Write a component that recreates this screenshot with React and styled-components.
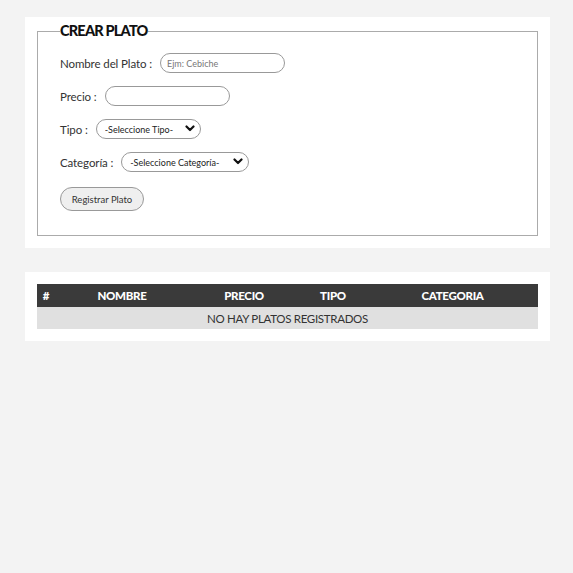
import React from "react";
import styled, { createGlobalStyle } from "styled-components";

const GlobalStyle = createGlobalStyle`
  * { box-sizing: border-box; }
  html, body {
    margin: 0;
    padding: 0;
    background-color: #f3f3f3;
    font-family: Lato, "Open Sans", sans-serif;
    color: #333;
  }
`;

const Page = styled.div`
  padding: 17px 23px 0 25px;
  display: flex;
  flex-direction: column;
  gap: 24px;
`;

const Panel = styled.section`
  width: 525px;
  background-color: #fff;
  padding: ${props => props.$pad};
`;

const Fieldset = styled.fieldset`
  margin: 0;
  border: 1px solid #ababab;
  padding: 0 22px 24px;
  display: flex;
  flex-direction: column;
`;

const Legend = styled.legend`
  padding: 0;
  font-size: 14.5px;
  line-height: 18px;
  font-weight: 900;
  letter-spacing: -0.8px;
  color: #111;
`;

const Row = styled.div`
  display: flex;
  align-items: center;
  gap: 8px;
  height: 20px;
  margin-top: ${props => props.$top || 13}px;
`;

const Label = styled.label`
  font-size: 11.5px;
  letter-spacing: -0.1px;
  color: #333;
`;

const TextInput = styled.input`
  width: 125px;
  height: 20px;
  border: 1px solid #999;
  border-radius: 10px;
  padding: 0 6px;
  font-family: inherit;
  font-size: 9px;
  color: #333;
  outline: none;

  &::placeholder {
    color: #777;
  }
`;

const SelectWrap = styled.div`
  position: relative;
  width: ${props => props.$w}px;
  height: 20px;
`;

const Select = styled.select`
  appearance: none;
  display: block;
  width: 100%;
  height: 20px;
  border: 1px solid #999;
  border-radius: 10px;
  background: #fff;
  padding: 0 0 0 8px;
  font-family: inherit;
  font-size: 9px;
  color: #222;
  outline: none;
`;

const Chevron = styled.svg`
  position: absolute;
  right: 6px;
  top: 6px;
  width: 10px;
  height: 8px;
  pointer-events: none;
`;

const Button = styled.button`
  width: 84px;
  height: 24px;
  margin-top: 15px;
  border: 1px solid #999;
  border-radius: 12px;
  background-color: #efefef;
  font-family: inherit;
  font-size: 9.5px;
  color: #333;
  padding: 0;
`;

const Table = styled.table`
  width: 501px;
  border-collapse: collapse;
  table-layout: fixed;
`;

const Th = styled.th`
  background-color: #3a3a3a;
  color: #fff;
  height: 23px;
  padding: 0;
  font-size: 11.5px;
  font-weight: 900;
  letter-spacing: -0.3px;
  text-align: center;
`;

const EmptyCell = styled.td`
  background-color: #e0e0e0;
  height: 22px;
  padding: 0;
  text-align: center;
  font-size: 11.5px;
  letter-spacing: -0.3px;
  color: #333;
`;

const ChevronIcon = () => (
  <Chevron viewBox="0 0 10 8">
    <path d="M1.5 1.5 L5 5 L8.5 1.5" fill="none" stroke="#111" strokeWidth="2.2" strokeLinecap="round" strokeLinejoin="round" />
  </Chevron>
);

const columns = [
  { key: "#", w: 18 },
  { key: "NOMBRE", w: 134 },
  { key: "PRECIO", w: 110 },
  { key: "TIPO", w: 68 },
  { key: "CATEGORIA", w: 171 },
];

const App = () => {
  return (
    <>
      <GlobalStyle />
      <Page>
        <Panel $pad="5px 12px 12px">
          <Fieldset>
            <Legend>CREAR PLATO</Legend>
            <Row $top={13}>
              <Label>Nombre del Plato :</Label>
              <TextInput placeholder="Ejm: Cebiche" />
            </Row>
            <Row>
              <Label>Precio :</Label>
              <TextInput />
            </Row>
            <Row>
              <Label>Tipo :</Label>
              <SelectWrap $w={105}>
                <Select defaultValue="">
                  <option value="">-Seleccione Tipo-</option>
                </Select>
                <ChevronIcon />
              </SelectWrap>
            </Row>
            <Row>
              <Label>Categoría :</Label>
              <SelectWrap $w={128}>
                <Select defaultValue="">
                  <option value="">-Seleccione Categoría-</option>
                </Select>
                <ChevronIcon />
              </SelectWrap>
            </Row>
            <div>
              <Button>Registrar Plato</Button>
            </div>
          </Fieldset>
        </Panel>
        <Panel $pad="12px">
          <Table>
            <colgroup>
              {columns.map(c => (
                <col key={c.key} style={{ width: c.w }} />
              ))}
            </colgroup>
            <thead>
              <tr>
                {columns.map(c => (
                  <Th key={c.key}>{c.key}</Th>
                ))}
              </tr>
            </thead>
            <tbody>
              <tr>
                <EmptyCell colSpan={5}>NO HAY PLATOS REGISTRADOS</EmptyCell>
              </tr>
            </tbody>
          </Table>
        </Panel>
      </Page>
    </>
  );
};

export default App;
